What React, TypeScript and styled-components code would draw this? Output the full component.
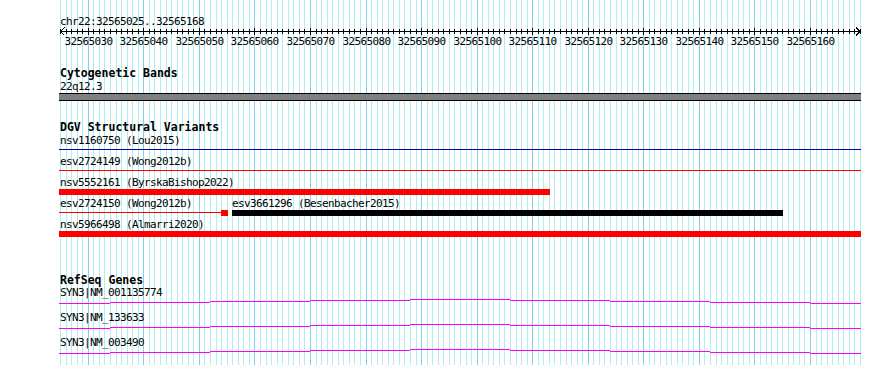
import styled, { createGlobalStyle } from "styled-components";

const VIEW_START = 32565025;
const VIEW_END = 32565168;
const TRACK_LEFT = 59;
const TRACK_WIDTH = 802;
const BP_PX = 800 / (VIEW_END - VIEW_START + 1);

// page x of the start of a base
const bpX = (bp: number) => Math.round(60 + (bp - VIEW_START) * BP_PX);

interface IFeature {
  label: string;
  from: number; // page px
  to: number;
  kind: "line" | "bar";
  color: string;
  box?: number; // page px where a thick box starts on a line feature
}

const dgvRows: IFeature[][] = [
  [{ label: "nsv1160750 (Lou2015)", from: 59, to: 861, kind: "line", color: "#0000b8" }],
  [{ label: "esv2724149 (Wong2012b)", from: 59, to: 861, kind: "line", color: "#ff0000" }],
  [{ label: "nsv5552161 (ByrskaBishop2022)", from: 59, to: 550, kind: "bar", color: "#ff0000" }],
  [
    { label: "esv2724150 (Wong2012b)", from: 59, to: 228, kind: "line", color: "#ff0000", box: 221 },
    { label: "esv3661296 (Besenbacher2015)", from: 232, to: 783, kind: "bar", color: "#000000" },
  ],
  [{ label: "nsv5966498 (Almarri2020)", from: 59, to: 861, kind: "bar", color: "#ff0000" }],
];

const genes = ["SYN3|NM_001135774", "SYN3|NM_133633", "SYN3|NM_003490"];
const geneSteps = [59, 110, 210, 310, 410, 510, 610, 710, 810, 861];
const geneLevels = [0, 1, 2, 3, 4, 3, 2, 1, 0];

const GlobalStyle = createGlobalStyle`
  html, body {
    margin: 0;
    padding: 0;
    background: #ffffff;
  }
  body {
    font-family: "DejaVu Sans Mono", "Liberation Mono", monospace;
  }
`;

const Page = styled.div`
  position: relative;
  width: 890px;
  height: 365px;
  overflow: hidden;
  background: #ffffff;
`;

const GridLayer = styled.svg`
  position: absolute;
  left: 0;
  top: 0;
  z-index: 0;
`;

const Tracks = styled.div`
  position: relative;
  z-index: 1;
  margin-left: ${TRACK_LEFT}px;
  width: ${TRACK_WIDTH}px;
  display: flex;
  flex-direction: column;
`;

const RulerBlock = styled.div`
  padding-top: 17px;
  display: flex;
  flex-direction: column;
`;

const Text = styled.div<{ $lh?: number }>`
  font-size: 11px;
  letter-spacing: -0.62px;
  line-height: ${(p) => p.$lh ?? 13}px;
  height: ${(p) => p.$lh ?? 13}px;
  color: #000;
  white-space: nowrap;
  padding-left: 1px;
`;

const Section = styled.section<{ $gap: number }>`
  margin-top: ${(p) => p.$gap}px;
  display: flex;
  flex-direction: column;
`;

const Title = styled.div`
  font-size: 11.5px;
  font-weight: bold;
  line-height: 13px;
  height: 13px;
  color: #000;
  padding-left: 1px;
  white-space: nowrap;
`;

const Band = styled.div`
  height: 6px;
  border: 1px solid #000;
  border-left: none;
  border-right: none;
  background: #808080;
`;

const VariantRow = styled.div`
  position: relative;
  height: 21px;
`;

const Feature = styled.div`
  position: absolute;
  top: 0;
  height: 21px;
`;

const FeatureLabel = styled(Text)`
  padding-left: 0;
`;

const Glyph = styled.div`
  position: relative;
  height: 6px;
`;

const ThinLine = styled.div<{ $color: string }>`
  position: absolute;
  left: 0;
  top: 2px;
  height: 1px;
  background: ${(p) => p.$color};
`;

const ThickBar = styled.div<{ $color: string }>`
  position: absolute;
  top: 0;
  height: 6px;
  background: ${(p) => p.$color};
`;

const GeneRow = styled.div`
  display: flex;
  flex-direction: column;
  height: 25px;
`;

const GeneLine = styled.svg`
  display: block;
`;

const Ruler = () => {
  const ticks = [];
  const labels = [];
  for (let b = VIEW_START; b <= VIEW_END + 1; b++) {
    const x = bpX(b) - TRACK_LEFT + 0.5;
    const major = (b - VIEW_START) % 10 === 5;
    ticks.push(
      <line key={b} x1={x} x2={x} y1={major ? 1 : 2} y2={major ? 8 : 7} stroke="#000" />
    );
    if (major && b <= VIEW_END) {
      labels.push(
        <text
          key={"l" + b}
          x={x}
          y={18}
          textAnchor="middle"
          fontFamily='"DejaVu Sans Mono", monospace'
          fontSize={11}
          letterSpacing={-0.62}
        >
          {b}
        </text>
      );
    }
  }
  return (
    <svg width={TRACK_WIDTH} height={21} style={{ display: "block" }} shapeRendering="crispEdges">
      <line x1={1} x2={TRACK_WIDTH} y1={4.5} y2={4.5} stroke="#000" />
      <polyline points="5.5,0.5 1.5,4.5 5.5,8.5" fill="none" stroke="#000" />
      <polyline points={`${TRACK_WIDTH - 5},0.5 ${TRACK_WIDTH - 1},4.5 ${TRACK_WIDTH - 5},8.5`} fill="none" stroke="#000" />
      {ticks}
      {labels}
    </svg>
  );
};

const Grid = () => {
  const lines = [];
  for (let i = 0; i <= VIEW_END - VIEW_START + 1; i++) {
    const x = bpX(VIEW_START + i);
    lines.push(
      <rect key={i} x={x} y={0} width={1} height={365} fill={i % 10 === 5 ? "#87ceeb" : "#afeeee"} />
    );
  }
  return (
    <GridLayer width={890} height={365} shapeRendering="crispEdges">
      {lines}
    </GridLayer>
  );
};

const App = () => {
  return (
    <Page>
      <GlobalStyle />
      <Grid />
      <Tracks>
        <RulerBlock>
          <Text $lh={10}>chr22:32565025..32565168</Text>
          <Ruler />
        </RulerBlock>

        <Section $gap={19}>
          <Title>Cytogenetic Bands</Title>
          <Text>22q12.3</Text>
          <Band />
        </Section>

        <Section $gap={20}>
          <Title>DGV Structural Variants</Title>
          {dgvRows.map((row, i) => (
            <VariantRow key={i}>
              {row.map((f) => (
                <Feature
                  key={f.label}
                  style={{ left: f.from - TRACK_LEFT, width: f.to - f.from }}
                >
                  <FeatureLabel style={{ paddingLeft: f.from === TRACK_LEFT ? 1 : 0 }}>
                    {f.label}
                  </FeatureLabel>
                  <Glyph>
                    {f.kind === "line" && (
                      <ThinLine $color={f.color} style={{ width: (f.box ?? f.to) - f.from }} />
                    )}
                    {f.kind === "line" && f.box && (
                      <ThickBar $color={f.color} style={{ left: f.box - f.from, width: f.to - f.box }} />
                    )}
                    {f.kind === "bar" && (
                      <ThickBar $color={f.color} style={{ left: 0, width: f.to - f.from }} />
                    )}
                  </Glyph>
                </Feature>
              ))}
            </VariantRow>
          ))}
        </Section>

        <Section $gap={35}>
          <Title>RefSeq Genes</Title>
          {genes.map((g) => (
            <GeneRow key={g}>
              <Text $lh={11}>{g}</Text>
              <GeneLine width={TRACK_WIDTH} height={14} shapeRendering="crispEdges">
                {geneLevels.map((lv, i) => (
                  <rect
                    key={i}
                    x={geneSteps[i] - TRACK_LEFT}
                    y={5 - lv}
                    width={geneSteps[i + 1] - geneSteps[i]}
                    height={1}
                    fill="#ff00ff"
                  />
                ))}
              </GeneLine>
            </GeneRow>
          ))}
        </Section>
      </Tracks>
    </Page>
  );
};

export default App;
